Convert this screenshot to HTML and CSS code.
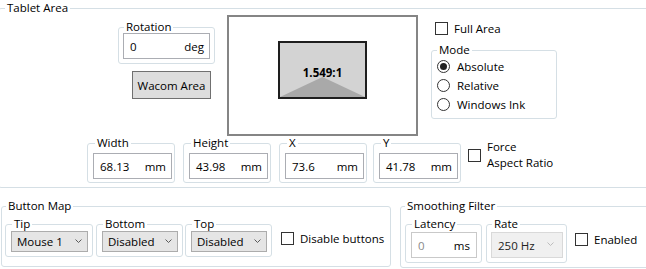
FILE: index.html
```html
<!DOCTYPE html>
<html>
<head>
<meta charset="utf-8">
<link rel="stylesheet" href="styles.css">
</head>
<body>
<fieldset class="group tablet">
  <legend>Tablet Area</legend>
  <div class="top-row">
    <div class="left-col">
      <fieldset class="group rotation">
        <legend>Rotation</legend>
        <div class="tb"><span>0</span><span>deg</span></div>
      </fieldset>
      <div class="btn">Wacom Area</div>
    </div>
    <div class="preview">
      <div class="area"><span class="ratio">1.549:1</span></div>
    </div>
    <div class="right-col">
      <div class="check full"><span class="box"></span><span>Full Area</span></div>
      <fieldset class="group mode">
        <legend>Mode</legend>
        <div class="radio"><span class="dot checked"></span><span>Absolute</span></div>
        <div class="radio"><span class="dot"></span><span>Relative</span></div>
        <div class="radio"><span class="dot"></span><span>Windows Ink</span></div>
      </fieldset>
    </div>
  </div>
  <div class="bottom-row">
    <fieldset class="group dim first">
      <legend>Width</legend>
      <div class="tb"><span>68.13</span><span>mm</span></div>
    </fieldset>
    <fieldset class="group dim">
      <legend>Height</legend>
      <div class="tb"><span>43.98</span><span>mm</span></div>
    </fieldset>
    <fieldset class="group dim">
      <legend>X</legend>
      <div class="tb"><span>73.6</span><span>mm</span></div>
    </fieldset>
    <fieldset class="group dim last">
      <legend>Y</legend>
      <div class="tb"><span>41.78</span><span>mm</span></div>
    </fieldset>
    <div class="check force"><span class="box"></span><span class="two">Force<br>Aspect Ratio</span></div>
  </div>
</fieldset>

<div class="lower-row">
  <fieldset class="group bmap">
    <legend>Button Map</legend>
    <div class="inner-row">
      <fieldset class="group sel tip">
        <legend>Tip</legend>
        <div class="cb"><span>Mouse 1</span><svg class="chev" width="7" height="4" viewBox="0 0 7 4"><path d="M0.5 0.5 L3.5 3.5 L6.5 0.5" fill="none" stroke="#5a5a5a" stroke-width="1"/></svg></div>
      </fieldset>
      <fieldset class="group sel bottom">
        <legend>Bottom</legend>
        <div class="cb"><span>Disabled</span><svg class="chev" width="7" height="4" viewBox="0 0 7 4"><path d="M0.5 0.5 L3.5 3.5 L6.5 0.5" fill="none" stroke="#5a5a5a" stroke-width="1"/></svg></div>
      </fieldset>
      <fieldset class="group sel topbtn">
        <legend>Top</legend>
        <div class="cb"><span>Disabled</span><svg class="chev" width="7" height="4" viewBox="0 0 7 4"><path d="M0.5 0.5 L3.5 3.5 L6.5 0.5" fill="none" stroke="#5a5a5a" stroke-width="1"/></svg></div>
      </fieldset>
      <div class="check disable"><span class="box"></span><span>Disable buttons</span></div>
    </div>
  </fieldset>
  <fieldset class="group smooth">
    <legend>Smoothing Filter</legend>
    <div class="inner-row">
      <fieldset class="group latency">
        <legend>Latency</legend>
        <div class="tb dis"><span class="grey">0</span><span>ms</span></div>
      </fieldset>
      <fieldset class="group rate">
        <legend>Rate</legend>
        <div class="cb dis"><span>250 Hz</span><svg class="chev" width="7" height="4" viewBox="0 0 7 4"><path d="M0.5 0.5 L3.5 3.5 L6.5 0.5" fill="none" stroke="#bdbdbd" stroke-width="1"/></svg></div>
      </fieldset>
      <div class="check enabled"><span class="box"></span><span>Enabled</span></div>
    </div>
  </fieldset>
</div>
</body>
</html>
```

FILE: styles.css
```css
* { box-sizing: border-box; }
html, body { margin: 0; padding: 0; }
body {
  width: 646px;
  height: 269px;
  overflow: hidden;
  background: #ffffff;
  font-family: "Open Sans", "Noto Sans", sans-serif;
  font-size: 11.5px;
  font-weight: 500;
  color: #000;
  white-space: nowrap;
}

.group {
  flex: none;
  border: 1px solid #d5dfe5;
  border-radius: 3px;
  margin: 0;
  padding: 0;
  min-width: 0;
}
.group > legend {
  padding: 0 2px;
  margin-left: 1px;
  line-height: 12px;
}

/* Tablet Area */
.tablet {
  margin: 1px 0 0 -2px;
  width: 670px;
  padding: 0 0 4px 0;
}
.tablet > legend {
  margin-left: 6px;
  line-height: 14px;
}
.top-row {
  display: flex;
  align-items: flex-start;
}
.left-col {
  flex: none;
  display: flex;
  flex-direction: column;
  align-items: flex-end;
  width: 97px;
  margin: 6px 0 0 119px;
}
.rotation {
  width: 97px;
  padding: 0 4px 4px 4px;
}
.tb {
  display: flex;
  justify-content: space-between;
  align-items: center;
  height: 26px;
  border: 1px solid #abadb3;
  background: #fff;
  padding: 0 5px 0 6px;
}
.btn {
  width: 79px;
  height: 28px;
  margin: 7px 4px 0 0;
  background: #dddddd;
  border: 1px solid #707070;
  display: flex;
  align-items: center;
  justify-content: center;
}
.preview {
  flex: none;
  width: 191px;
  height: 121px;
  margin-left: 12px;
  border: 2px solid #858585;
}
.area {
  position: relative;
  width: 89px;
  height: 58px;
  margin: 24px auto 0;
  border: 2px solid #1e1e1e;
  background: #d3d3d3;
  display: flex;
  align-items: center;
  justify-content: center;
  padding-top: 4px;
}
.area::before {
  content: "";
  position: absolute;
  left: 0;
  right: 0;
  bottom: 0;
  height: 20px;
  background: #a9a9a9;
  clip-path: polygon(0 100%, 50% 0, 100% 100%);
}
.ratio {
  position: relative;
  font-weight: 700;
}
.right-col {
  flex: none;
  width: 126px;
  margin-left: 13px;
}
.check {
  flex: none;
  display: flex;
  align-items: center;
  gap: 6px;
}
.box {
  flex: none;
  width: 13px;
  height: 13px;
  border: 1px solid #333;
  background: #fff;
}
.full {
  height: 13px;
  margin: 7px 0 0 4px;
}
.mode {
  margin-top: 9px;
  padding: 1px 0 4px 5px;
}
.mode > legend { margin-left: 0; }
.radio {
  display: flex;
  align-items: center;
  gap: 7px;
  height: 19px;
}
.dot {
  flex: none;
  width: 13px;
  height: 13px;
  border: 1px solid #333;
  border-radius: 50%;
  background: #fff;
  display: flex;
  align-items: center;
  justify-content: center;
}
.dot.checked::after {
  content: "";
  width: 7px;
  height: 7px;
  border-radius: 50%;
  background: #222;
}

.bottom-row {
  display: flex;
  align-items: flex-start;
  margin-top: 1px;
}
.dim {
  width: 88px;
  margin-left: 8px;
  padding: 4px 2px 3px 5px;
}
.dim > legend { margin-left: 2px; }
.dim.first { margin-left: 88px; }
.dim.last { margin-left: 6px; }
.force {
  margin: 2px 0 0 7px;
}
.two { line-height: 16px; }

/* Lower row */
.lower-row {
  display: flex;
  align-items: flex-start;
  margin-top: 12px;
}
.inner-row {
  display: flex;
  align-items: flex-start;
  margin-top: 6px;
}
.bmap {
  width: 390px;
  margin-left: 1px;
  padding: 0 0 9px 3px;
}
.sel {
  width: 87px;
  padding: 1px 4px 4px 5px;
}
.tip { width: 88px; }
.bottom { margin-left: 3px; }
.topbtn { margin-left: 2px; }
.cb {
  display: flex;
  align-items: center;
  justify-content: space-between;
  height: 21px;
  border: 1px solid #acacac;
  background: #e5e5e5;
  padding: 0 5px 0 5px;
}
.chev { margin-bottom: 2px; }
.disable { margin: 13px 0 0 9px; }

.smooth {
  width: 260px;
  margin-left: 9px;
  padding: 0 0 4px 4px;
}
.smooth > legend { margin-left: 0; }
.latency {
  width: 77px;
  padding: 2px 4px 4px 5px;
}
.tb.dis { border-color: #c9c9c9; padding: 0 6px 0 6px; }
.grey { color: #8a8a8a; }
.rate {
  width: 81px;
  margin-left: 4px;
  padding: 2px 3px 4px 4px;
}
.cb.dis {
  height: 26px;
  background: #f0f0f0;
  border-color: #d9d9d9;
  color: #222;
  padding: 0 8px 0 6px;
}
.enabled { margin: 14px 0 0 8px; }
```
